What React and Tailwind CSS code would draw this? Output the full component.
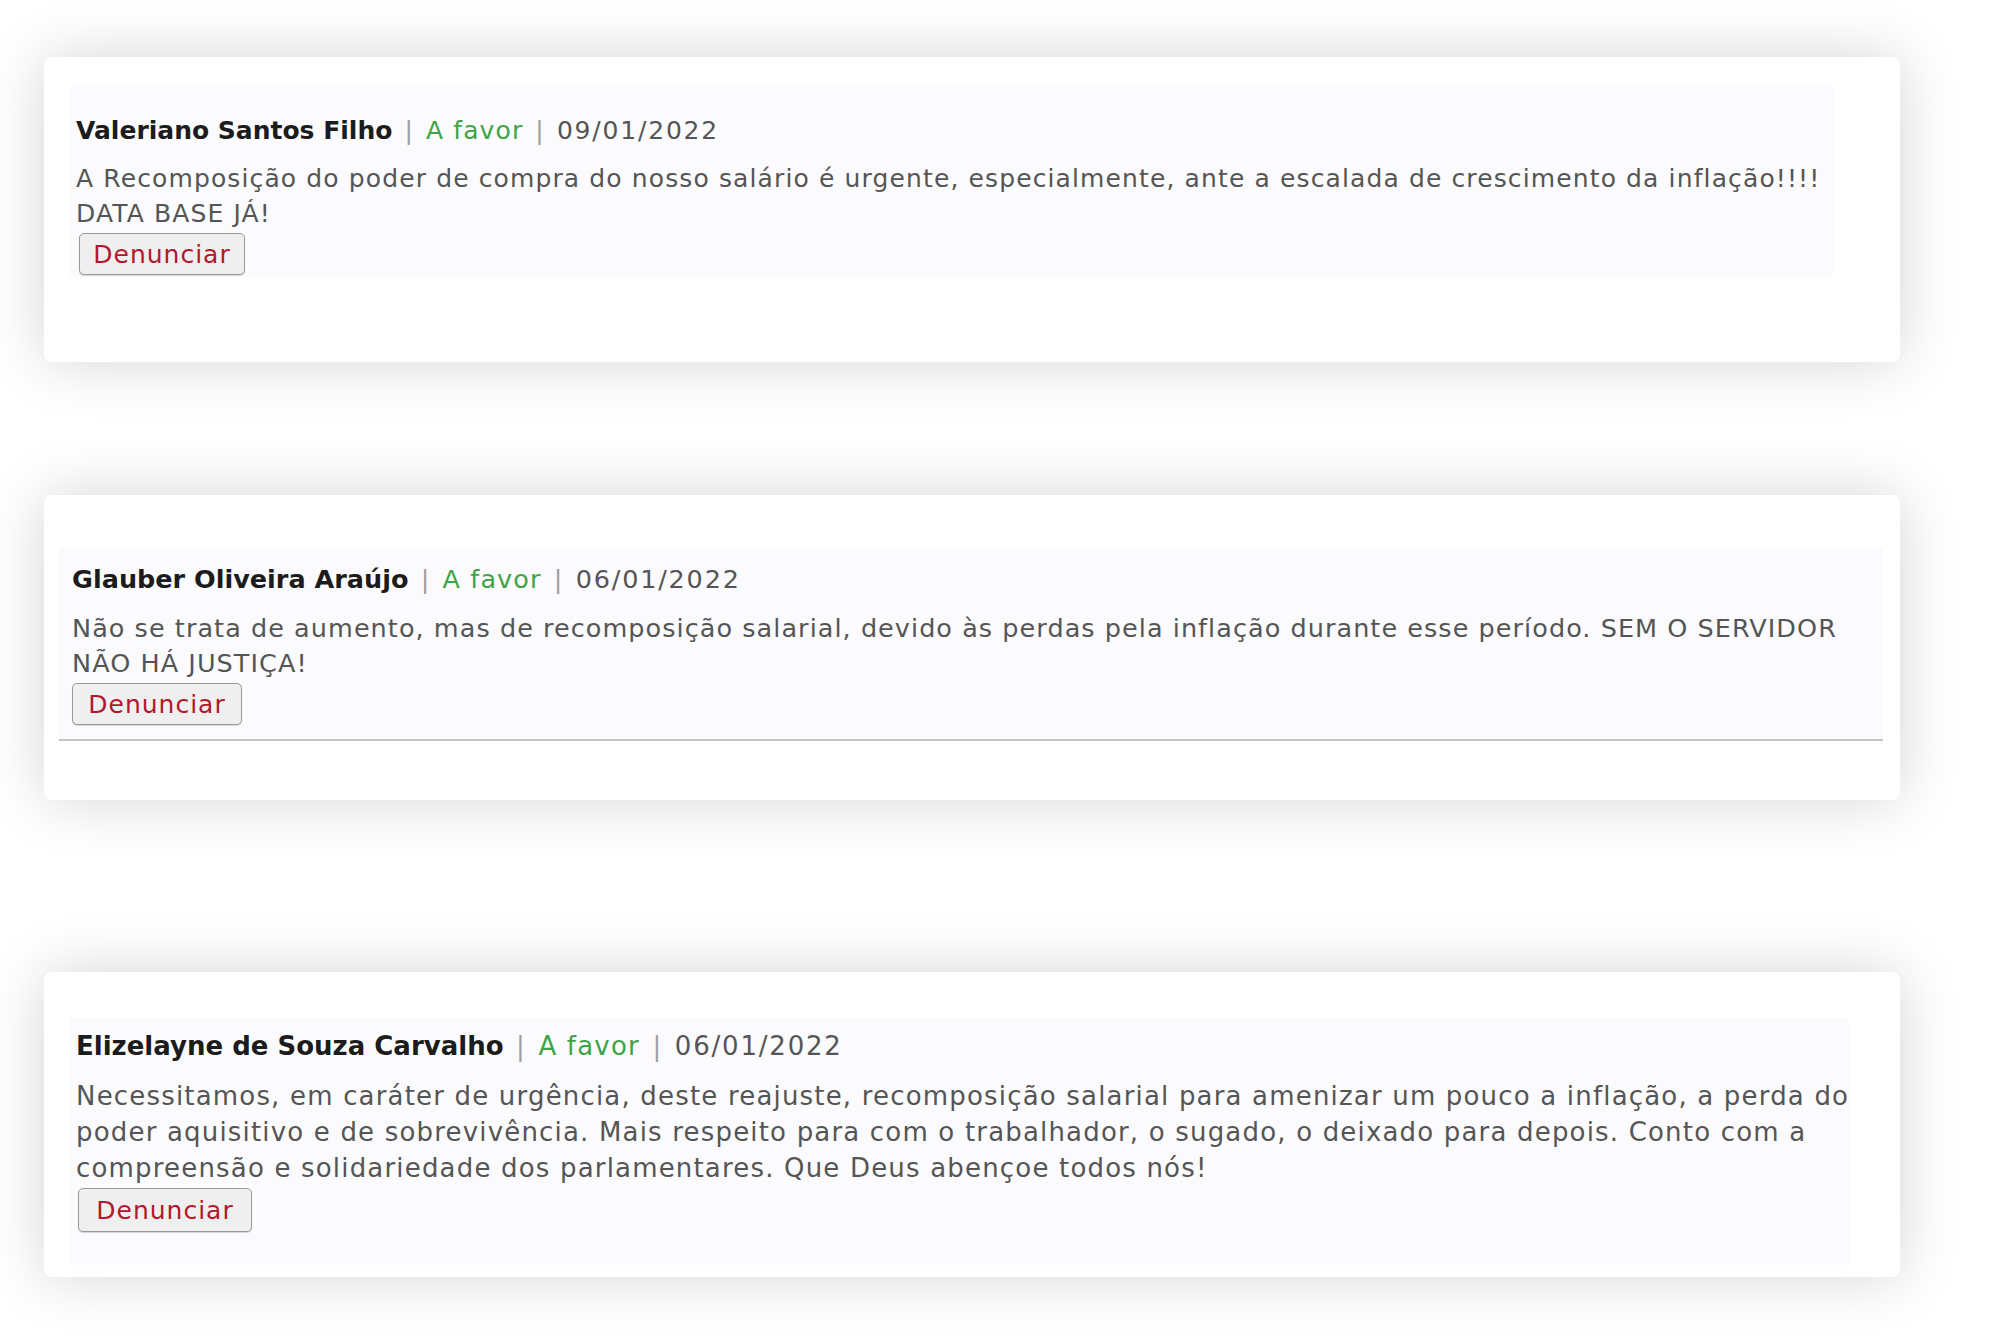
import React from "react";

const font = { fontFamily: '"DejaVu Sans", "Verdana", sans-serif' };

function Header({ name, date, size, track }) {
  return (
    <div className={"leading-[34px] whitespace-nowrap " + size}>
      <span className="font-bold text-[#1c1c1c]">{name}</span>
      <span className={"mx-[3px] text-[#a0a0a0] " + track}> | </span>
      <span className={"text-[#3fa447] " + track}>A favor</span>
      <span className={"mx-[3px] text-[#a0a0a0] " + track}> | </span>
      <span className="tracking-[1.8px] text-[#555555]">{date}</span>
    </div>
  );
}

function Body({ lines, lh, size, track }) {
  return (
    <div className={"text-[#555555] whitespace-nowrap " + lh + " " + size + " " + track}>
      {lines.map((l, i) => (
        <div key={i}>{l}</div>
      ))}
    </div>
  );
}

function Btn({ h, w }) {
  return (
    <button
      className={
        "mt-[2px] rounded-[5px] border border-[#9a9a9a] bg-[#efefef] text-[25px] leading-none tracking-[1px] text-[#b3172c] shadow-[0_1px_1px_rgba(0,0,0,0.15)] " +
        h +
        " " +
        w
      }
    >
      Denunciar
    </button>
  );
}

export default function App() {
  return (
    <div className="min-h-[1340px] w-[1992px] bg-white pt-[57px]" style={font}>
      {/* Card 1 */}
      <div className="ml-[44px] h-[305px] w-[1856px] rounded-[8px] bg-white pt-[28px] shadow-[0_0_60px_rgba(0,0,0,0.17)]">
        <div className="ml-[26px] h-[192px] w-[1763px] bg-[#fbfbfd] pl-[6px] pt-[29px]">
          <Header name="Valeriano Santos Filho" date="09/01/2022" size="text-[25px]" track="tracking-[1.1px]" />
          <div className="mt-[13px]">
            <Body
              size="text-[25px]"
              track="tracking-[1.12px]"
              lh="leading-[35px]"
              lines={[
                "A Recomposição do poder de compra do nosso salário é urgente, especialmente, ante a escalada de crescimento da inflação!!!!",
                "DATA BASE JÁ!",
              ]}
            />
          </div>
          <div className="pl-[3px]">
            <Btn h="h-[42px]" w="w-[166px]" />
          </div>
        </div>
      </div>

      {/* Card 2 */}
      <div className="ml-[44px] mt-[133px] h-[305px] w-[1856px] rounded-[8px] bg-white pt-[53px] shadow-[0_0_60px_rgba(0,0,0,0.17)]">
        <div className="ml-[15px] h-[193px] w-[1824px] border-b-2 border-[#c4c4c4] bg-[#fbfbfd] pl-[13px] pt-[14px]">
          <Header name="Glauber Oliveira Araújo" date="06/01/2022" size="text-[25.5px]" track="tracking-[1.1px]" />
          <div className="mt-[15px]">
            <Body
              size="text-[25.5px]"
              track="tracking-[1.05px]"
              lh="leading-[35px]"
              lines={[
                "Não se trata de aumento, mas de recomposição salarial, devido às perdas pela inflação durante esse período. SEM O SERVIDOR",
                "NÃO HÁ JUSTIÇA!",
              ]}
            />
          </div>
          <Btn h="h-[42px]" w="w-[170px]" />
        </div>
      </div>

      {/* Card 3 */}
      <div className="ml-[44px] mt-[172px] h-[305px] w-[1856px] rounded-[8px] bg-white pt-[46px] shadow-[0_0_60px_rgba(0,0,0,0.17)]">
        <div className="ml-[26px] h-[247px] w-[1779px] bg-[#fbfbfd] pl-[6px] pt-[11px]">
          <Header name="Elizelayne de Souza Carvalho" date="06/01/2022" size="text-[26px]" track="tracking-[1.2px]" />
          <div className="mt-[15px]">
            <Body
              size="text-[26px]"
              track="tracking-[1.18px]"
              lh="leading-[36px]"
              lines={[
                "Necessitamos, em caráter de urgência, deste reajuste, recomposição salarial para amenizar um pouco a inflação, a perda do",
                "poder aquisitivo e de sobrevivência. Mais respeito para com o trabalhador, o sugado, o deixado para depois. Conto com a",
                "compreensão e solidariedade dos parlamentares. Que Deus abençoe todos nós!",
              ]}
            />
          </div>
          <div className="pl-[2px]">
            <Btn h="h-[44px]" w="w-[174px]" />
          </div>
        </div>
      </div>
    </div>
  );
}
